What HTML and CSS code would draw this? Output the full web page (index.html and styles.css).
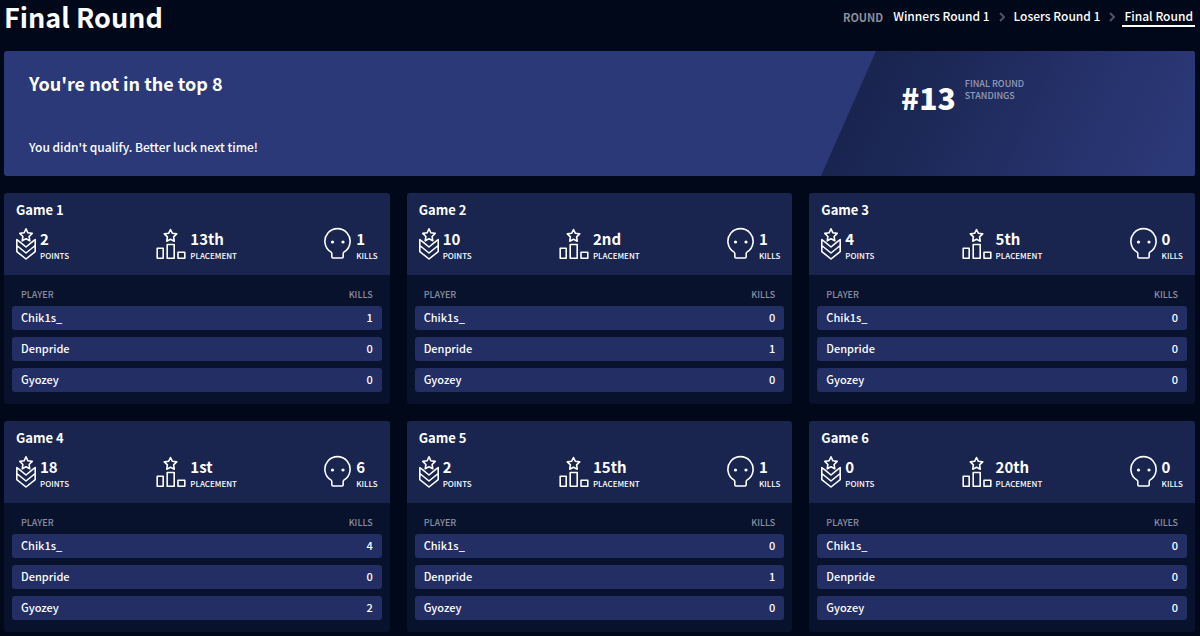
FILE: index.html
```html
<!DOCTYPE html>
<html lang="en">
<head>
<meta charset="utf-8">
<title>Final Round</title>
<link rel="stylesheet" href="styles.css">
</head>
<body>
<svg class="sprite" aria-hidden="true">
  <symbol id="icon-points" viewBox="0 0 20 34">
    <path d="M10 1.800l1.900 4 4.300.600-3.100 3.100.700 4.300-3.800-2-3.800 2 .700-4.300-3.100-3.100 4.300-.600z"/>
    <path d="M3.200 14.300L.8 12.600v12L10 32l9.200-7.400v-12l-2.400 1.700M3.200 14.300L10 20l6.800-5.700M.8 18.500L10 26l9.200-7.500"/>
  </symbol>
  <symbol id="icon-placement" viewBox="0 0 30 34">
    <path d="M14.500 2.500l1.900 3.800 4.300.600-3.100 3 .700 4.300-3.800-2-3.800 2 .700-4.300-3.100-3 4.300-.600z"/>
    <path d="M1.200 21.200h6v10h-6zM11.200 17.500h7v13.700h-7zM22 25.200h6.800v6H22z"/>
  </symbol>
  <symbol id="icon-kills" viewBox="0 0 28 34">
    <path d="M9 31q-1.200 0-1.200-1.200v-3.300q0-1-1-1.600A12.600 12.600 0 1 1 20.200 24.900q-1 .600-1 1.600v3.300q0 1.200-1.200 1.200z"/>
    <circle class="eye" cx="8.500" cy="15" r="1.600"/><circle class="eye" cx="19" cy="15" r="1.600"/>
  </symbol>
</svg>

<header class="topbar">
  <h1 class="title">Final Round</h1>
  <nav class="rounds" aria-label="Round">
    <span class="rounds-label">ROUND</span>
    <a class="round" href="#winners-1">Winners Round 1</a>
    <svg class="chevron" viewBox="0 0 6 10" aria-hidden="true"><path d="M1 1l4 4-4 4"/></svg>
    <a class="round" href="#losers-1">Losers Round 1</a>
    <svg class="chevron" viewBox="0 0 6 10" aria-hidden="true"><path d="M1 1l4 4-4 4"/></svg>
    <a class="round round-current" href="#final" aria-current="page">Final Round</a>
  </nav>
</header>

<main>
  <section class="banner">
    <div class="banner-message">
      <h2 class="banner-title">You're not in the top 8</h2>
      <p class="banner-text">You didn't qualify. Better luck next time!</p>
    </div>
    <div class="standing">
      <strong class="rank">#13</strong>
      <span class="rank-label">FINAL ROUND<br>STANDINGS</span>
    </div>
  </section>

  <div class="games">
    <article class="game">
      <header class="game-head">
        <h3 class="game-title">Game 1</h3>
        <div class="stats">
          <div class="stat"><svg class="icon icon-points"><use href="#icon-points"/></svg><div class="figure"><b class="value">2</b><span class="unit">POINTS</span></div></div>
          <div class="stat"><svg class="icon icon-placement"><use href="#icon-placement"/></svg><div class="figure"><b class="value">13th</b><span class="unit">PLACEMENT</span></div></div>
          <div class="stat"><svg class="icon icon-kills"><use href="#icon-kills"/></svg><div class="figure"><b class="value">1</b><span class="unit">KILLS</span></div></div>
        </div>
      </header>
      <div class="game-body">
        <table class="players">
          <thead><tr><th>PLAYER</th><th>KILLS</th></tr></thead>
          <tbody>
            <tr><td>Chik1s_</td><td>1</td></tr>
            <tr><td>Denpride</td><td>0</td></tr>
            <tr><td>Gyozey</td><td>0</td></tr>
          </tbody>
        </table>
      </div>
    </article>

    <article class="game">
      <header class="game-head">
        <h3 class="game-title">Game 2</h3>
        <div class="stats">
          <div class="stat"><svg class="icon icon-points"><use href="#icon-points"/></svg><div class="figure"><b class="value">10</b><span class="unit">POINTS</span></div></div>
          <div class="stat"><svg class="icon icon-placement"><use href="#icon-placement"/></svg><div class="figure"><b class="value">2nd</b><span class="unit">PLACEMENT</span></div></div>
          <div class="stat"><svg class="icon icon-kills"><use href="#icon-kills"/></svg><div class="figure"><b class="value">1</b><span class="unit">KILLS</span></div></div>
        </div>
      </header>
      <div class="game-body">
        <table class="players">
          <thead><tr><th>PLAYER</th><th>KILLS</th></tr></thead>
          <tbody>
            <tr><td>Chik1s_</td><td>0</td></tr>
            <tr><td>Denpride</td><td>1</td></tr>
            <tr><td>Gyozey</td><td>0</td></tr>
          </tbody>
        </table>
      </div>
    </article>

    <article class="game">
      <header class="game-head">
        <h3 class="game-title">Game 3</h3>
        <div class="stats">
          <div class="stat"><svg class="icon icon-points"><use href="#icon-points"/></svg><div class="figure"><b class="value">4</b><span class="unit">POINTS</span></div></div>
          <div class="stat"><svg class="icon icon-placement"><use href="#icon-placement"/></svg><div class="figure"><b class="value">5th</b><span class="unit">PLACEMENT</span></div></div>
          <div class="stat"><svg class="icon icon-kills"><use href="#icon-kills"/></svg><div class="figure"><b class="value">0</b><span class="unit">KILLS</span></div></div>
        </div>
      </header>
      <div class="game-body">
        <table class="players">
          <thead><tr><th>PLAYER</th><th>KILLS</th></tr></thead>
          <tbody>
            <tr><td>Chik1s_</td><td>0</td></tr>
            <tr><td>Denpride</td><td>0</td></tr>
            <tr><td>Gyozey</td><td>0</td></tr>
          </tbody>
        </table>
      </div>
    </article>

    <article class="game">
      <header class="game-head">
        <h3 class="game-title">Game 4</h3>
        <div class="stats">
          <div class="stat"><svg class="icon icon-points"><use href="#icon-points"/></svg><div class="figure"><b class="value">18</b><span class="unit">POINTS</span></div></div>
          <div class="stat"><svg class="icon icon-placement"><use href="#icon-placement"/></svg><div class="figure"><b class="value">1st</b><span class="unit">PLACEMENT</span></div></div>
          <div class="stat"><svg class="icon icon-kills"><use href="#icon-kills"/></svg><div class="figure"><b class="value">6</b><span class="unit">KILLS</span></div></div>
        </div>
      </header>
      <div class="game-body">
        <table class="players">
          <thead><tr><th>PLAYER</th><th>KILLS</th></tr></thead>
          <tbody>
            <tr><td>Chik1s_</td><td>4</td></tr>
            <tr><td>Denpride</td><td>0</td></tr>
            <tr><td>Gyozey</td><td>2</td></tr>
          </tbody>
        </table>
      </div>
    </article>

    <article class="game">
      <header class="game-head">
        <h3 class="game-title">Game 5</h3>
        <div class="stats">
          <div class="stat"><svg class="icon icon-points"><use href="#icon-points"/></svg><div class="figure"><b class="value">2</b><span class="unit">POINTS</span></div></div>
          <div class="stat"><svg class="icon icon-placement"><use href="#icon-placement"/></svg><div class="figure"><b class="value">15th</b><span class="unit">PLACEMENT</span></div></div>
          <div class="stat"><svg class="icon icon-kills"><use href="#icon-kills"/></svg><div class="figure"><b class="value">1</b><span class="unit">KILLS</span></div></div>
        </div>
      </header>
      <div class="game-body">
        <table class="players">
          <thead><tr><th>PLAYER</th><th>KILLS</th></tr></thead>
          <tbody>
            <tr><td>Chik1s_</td><td>0</td></tr>
            <tr><td>Denpride</td><td>1</td></tr>
            <tr><td>Gyozey</td><td>0</td></tr>
          </tbody>
        </table>
      </div>
    </article>

    <article class="game">
      <header class="game-head">
        <h3 class="game-title">Game 6</h3>
        <div class="stats">
          <div class="stat"><svg class="icon icon-points"><use href="#icon-points"/></svg><div class="figure"><b class="value">0</b><span class="unit">POINTS</span></div></div>
          <div class="stat"><svg class="icon icon-placement"><use href="#icon-placement"/></svg><div class="figure"><b class="value">20th</b><span class="unit">PLACEMENT</span></div></div>
          <div class="stat"><svg class="icon icon-kills"><use href="#icon-kills"/></svg><div class="figure"><b class="value">0</b><span class="unit">KILLS</span></div></div>
        </div>
      </header>
      <div class="game-body">
        <table class="players">
          <thead><tr><th>PLAYER</th><th>KILLS</th></tr></thead>
          <tbody>
            <tr><td>Chik1s_</td><td>0</td></tr>
            <tr><td>Denpride</td><td>0</td></tr>
            <tr><td>Gyozey</td><td>0</td></tr>
          </tbody>
        </table>
      </div>
    </article>
  </div>
</main>
</body>
</html>
```

FILE: styles.css
```css
* { box-sizing: border-box; }

body {
  margin: 0;
  padding: 0 5px 4px 4px;
  background: #000819;
  color: #fff;
  font-family: "Noto Sans CJK JP", "Noto Sans", sans-serif;
  font-size: 12px;
  font-weight: 500;
}

h1, h2, h3, p { margin: 0; }

.sprite { display: none; }

.topbar {
  display: flex;
  justify-content: space-between;
  align-items: flex-start;
  min-height: 51px;
}

.title { font-size: 27px; line-height: 34px; font-weight: 700; }

.rounds { display: flex; align-items: center; padding-top: 6px; }

.rounds-label { margin-right: 8px; color: #8b8f9c; font-size: 11px; line-height: 22px; font-weight: 700; }

.round {
  padding: 0 2px;
  border-bottom: 2px solid transparent;
  color: #fff;
  font-size: 12px;
  line-height: 18px;
  text-decoration: none;
}

.round-current { border-color: #fff; }

.chevron {
  width: 6px;
  height: 10px;
  margin: 0 7px;
  fill: none;
  stroke: #4d5363;
  stroke-width: 2;
}

.banner {
  display: flex;
  min-height: 125px;
  margin-bottom: 17px;
  border-radius: 3px;
  background: #2c3979;
  overflow: hidden;
}

.banner-message {
  flex: 1;
  display: flex;
  flex-direction: column;
  justify-content: space-between;
  padding: 19px 25px;
}

.banner-title { font-size: 18px; line-height: 26px; font-weight: 700; }
.banner-text { font-size: 12px; line-height: 20px; }

.standing {
  display: flex;
  align-items: flex-start;
  gap: 9px;
  width: 374px;
  padding: 27px 0 0 80px;
  background: linear-gradient(115deg, #19244f 15%, #2c3979 95%);
  clip-path: polygon(55px 0, 100% 0, 100% 100%, 0 100%);
}

.rank { font-size: 30px; line-height: 38px; font-weight: 900; }
.rank-label { color: #969cba; font-size: 9px; line-height: 12px; font-weight: 500; }

.games {
  display: grid;
  grid-template-columns: repeat(3, 1fr);
  gap: 17px;
}

.game { border-radius: 3px; background: #08122d; overflow: hidden; }

.game-head { padding: 7px 12px 12px; background: #19244f; }
.game-title { font-size: 13px; line-height: 20px; font-weight: 700; }

.stats { display: flex; justify-content: space-between; padding-top: 7px; }
.stat { display: flex; align-items: flex-start; gap: 4px; }
.figure { padding-top: 3px; }

.icon {
  height: 34px;
  fill: none;
  stroke: #fff;
  stroke-width: 1.6px;
  stroke-linejoin: round;
  stroke-linecap: round;
}

.icon-points { width: 20px; }
.icon-placement { width: 30px; }
.icon-kills { width: 28px; }
.eye { fill: #fff; stroke: none; }

.value { display: block; font-size: 15px; line-height: 18px; font-weight: 700; }
.unit { display: block; font-size: 8px; line-height: 15px; }

.game-body { padding: 0 8px 5px; }

.players { width: 100%; border-collapse: separate; border-spacing: 0 7px; }
.players th { padding: 8px 9px 0; color: #8b90a1; font-size: 9px; line-height: 9px; font-weight: 500; text-align: left; }
.players td { padding: 1px 9px 3px; background: #232e65; font-size: 11px; line-height: 20px; }
.players th:last-child, .players td:last-child { text-align: right; }
.players td:first-child { border-radius: 3px 0 0 3px; }
.players td:last-child { border-radius: 0 3px 3px 0; }
```
